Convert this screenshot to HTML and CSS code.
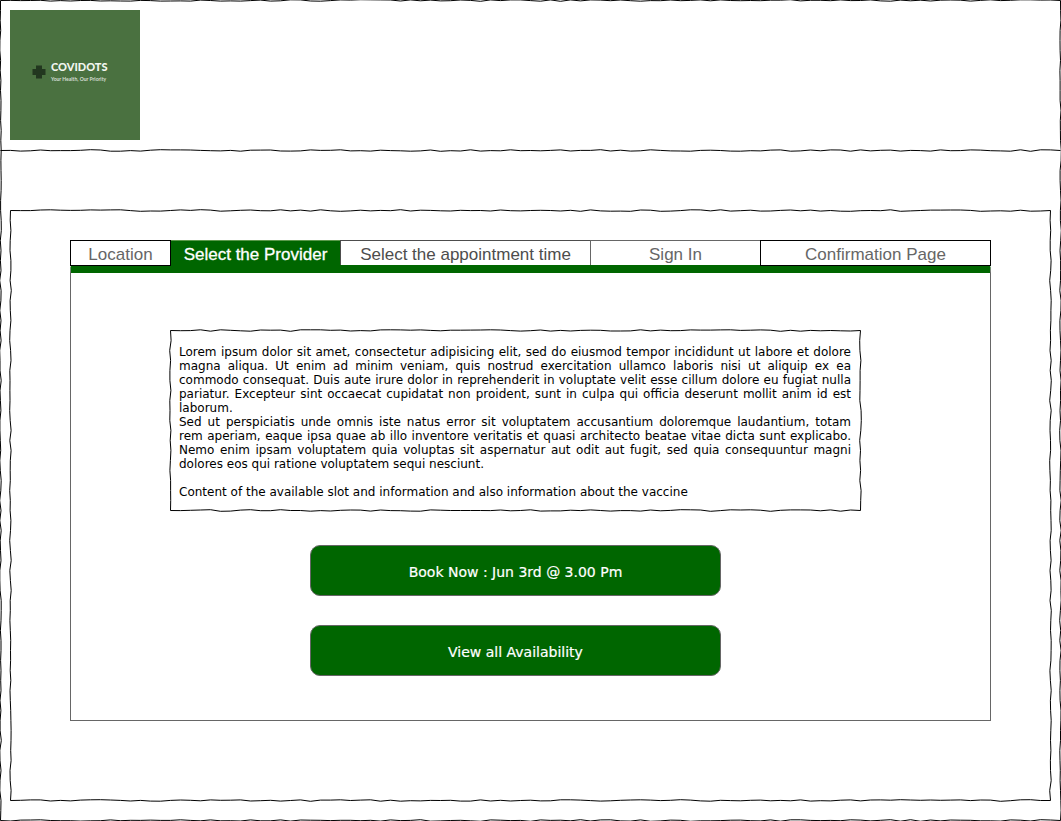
FILE: index.html
```html
<!DOCTYPE html>
<html lang="en">
<head>
<meta charset="utf-8">
<meta name="viewport" content="width=device-width, initial-scale=1">
<title>Covidots</title>
<link rel="stylesheet" href="styles.css">
</head>
<body>
<div class="page sketch" data-seed="7">
  <header class="header sketch" data-seed="23" data-sides="bottom">
    <div class="logo">
      <svg class="logo-mark" viewBox="0 0 14 14" aria-hidden="true"><path d="M4 .5h6v3.500h3.500v6h-3.500v3.500h-6v-3.500h-3.500v-6h3.500z" fill="#22371f"/></svg>
      <div class="logo-text">
        <span class="logo-name">COVIDOTS</span>
        <span class="logo-tagline">Your Health, Our Priority</span>
      </div>
    </div>
  </header>
  <main class="main sketch" data-seed="41">
    <div class="tabs" role="tablist" aria-label="Booking steps">
      <button class="tab tab-edge" type="button" role="tab" aria-selected="false">Location</button>
      <button class="tab tab-active" type="button" role="tab" aria-selected="true" aria-controls="provider">Select the Provider</button>
      <button class="tab tab-next" type="button" role="tab" aria-selected="false">Select the appointment time</button>
      <button class="tab" type="button" role="tab" aria-selected="false">Sign In</button>
      <button class="tab tab-edge" type="button" role="tab" aria-selected="false">Confirmation Page</button>
    </div>
    <section class="panel" id="provider" role="tabpanel" aria-label="Select the Provider">
      <div class="panel-body">
        <div class="info sketch" data-seed="58">
          <p>Lorem ipsum dolor sit amet, consectetur adipisicing elit, sed do eiusmod tempor incididunt ut labore et dolore magna aliqua. Ut enim ad minim veniam, quis nostrud exercitation ullamco laboris nisi ut aliquip ex ea commodo consequat. Duis aute irure dolor in reprehenderit in voluptate velit esse cillum dolore eu fugiat nulla pariatur. Excepteur sint occaecat cupidatat non proident, sunt in culpa qui officia deserunt mollit anim id est laborum.</p>
          <p>Sed ut perspiciatis unde omnis iste natus error sit voluptatem accusantium doloremque laudantium, totam rem&nbsp;aperiam, eaque ipsa quae ab illo inventore veritatis et quasi architecto beatae vitae dicta sunt explicabo. Nemo enim ipsam voluptatem quia voluptas sit aspernatur aut odit aut fugit, sed quia consequuntur magni dolores eos qui ratione voluptatem sequi nesciunt.</p>
          <p class="info-note">Content of the available slot and information and also information about the vaccine</p>
        </div>
        <div class="actions">
          <button class="action" type="button">Book Now : Jun 3rd @ 3.00 Pm</button>
          <button class="action" type="button">View all Availability</button>
        </div>
      </div>
    </section>
  </main>
</div>
<script src="sketch.js"></script>
</body>
</html>
```

FILE: styles.css
```css
* {
  box-sizing: border-box;
}

body {
  margin: 0;
  background: #fff;
  color: #000;
  font-family: "DejaVu Sans", sans-serif;
  font-size: 12px;
  line-height: 14px;
}

button {
  font: inherit;
  cursor: pointer;
}

.sketch {
  position: relative;
}

.sketch-lines {
  position: absolute;
  inset: 0;
  width: 100%;
  height: 100%;
  pointer-events: none;
  fill: none;
  stroke: #000;
  stroke-width: 1;
}

.page {
  display: flex;
  flex-direction: column;
  min-height: 100vh;
  padding-bottom: 20px;
}

.header {
  padding: 10px 10px 11px;
}

.logo {
  display: flex;
  align-items: center;
  gap: 5px;
  width: 130px;
  height: 130px;
  padding: 0 22px 6px;
  background: #4a7140;
}

.logo-mark {
  flex: none;
  width: 14px;
  height: 14px;
}

.logo-text {
  display: flex;
  flex-direction: column;
  gap: 1px;
  font-family: Lato, sans-serif;
  white-space: nowrap;
}

.logo-name {
  color: #f2f6f0;
  font-size: 11px;
  font-weight: 900;
  line-height: 14px;
}

.logo-tagline {
  color: #d5dfd2;
  font-size: 5px;
  font-weight: 700;
  line-height: 9px;
}

.main {
  flex: 1;
  margin: 59px 10px 0;
  padding: 30px 60px 80px;
}

.tabs {
  display: grid;
  grid-template-columns: 100fr 170fr 250fr 170fr 231fr;
  grid-template-rows: 25px;
}

.tab {
  min-width: 0;
  margin-right: -1px;
  padding: 4px 0 0;
  border: 1px solid #666;
  border-bottom: 0;
  background: #fff;
  color: #666;
  font-family: "Liberation Sans", Arial, sans-serif;
  font-size: 17px;
  line-height: 20px;
}

.tab:last-child {
  margin-right: 0;
}

.tab-edge {
  position: relative;
  height: 26px;
  border: 1px solid #000;
}

.tab-active {
  border-color: #006600;
  border-top-color: #5c9a4c;
  background: #006600;
  color: #fff;
  -webkit-text-stroke: 0.3px #fff;
}

.tab-next {
  border-color: #4d4d4d;
  color: #4d4d4d;
}

.panel {
  border: 1px solid #666;
  border-top: 8px solid #006600;
  border-radius: 4px 4px 0 0;
}

.panel-body {
  padding: 57px 129px 44px 99px;
}

.info {
  padding: 15px 10px 12px 9px;
  text-align: justify;
}

.info p {
  margin: 0;
}

.info .info-note {
  margin-top: 14px;
}

.actions {
  display: flex;
  flex-direction: column;
  gap: 29px;
  padding: 34px 140px 0;
}

.action {
  height: 51px;
  padding: 2px 10px 0;
  border: 1px solid #666;
  border-radius: 10px;
  background: #006600;
  color: #fff;
  font-size: 14px;
  -webkit-text-stroke: 0.2px #fff;
}
```

FILE: sketch.js
```js
// Draws hand-sketched outlines around every .sketch element.
const NS = "http://www.w3.org/2000/svg";
const STEP = 10;

function generator(seed) {
  let s = seed;
  return () => {
    s = (s * 16807) % 2147483647;
    return s / 2147483647;
  };
}

function line(x1, y1, x2, y2, random) {
  const horizontal = y1 === y2;
  const length = horizontal ? x2 - x1 : y2 - y1;
  let d = `M${x1} ${y1}`;
  for (let t = STEP; t < length; t += STEP) {
    const shift = Math.round((random() * 2 - 1) * 8) / 10;
    d += horizontal ? `L${x1 + t} ${y1 + shift}` : `L${x1 + shift} ${y1 + t}`;
  }
  return `${d}L${x2} ${y2}`;
}

function draw(box) {
  const random = generator(Number(box.dataset.seed) * 7919);
  const right = box.clientWidth - 0.5;
  const bottom = box.clientHeight - 0.5;
  const sides = {
    top: [0.5, 0.5, right, 0.5],
    right: [right, 0.5, right, bottom],
    bottom: [0.5, bottom, right, bottom],
    left: [0.5, 0.5, 0.5, bottom]
  };
  const wanted = (box.dataset.sides || "top right bottom left").split(" ");
  const svg = document.createElementNS(NS, "svg");
  const path = document.createElementNS(NS, "path");
  svg.setAttribute("class", "sketch-lines");
  svg.setAttribute("overflow", "visible");
  svg.setAttribute("aria-hidden", "true");
  path.setAttribute("d", wanted.map((side) => line(...sides[side], random)).join(""));
  svg.append(path);
  box.querySelector(":scope > .sketch-lines")?.remove();
  box.append(svg);
}

function drawAll() {
  document.querySelectorAll(".sketch").forEach(draw);
}

drawAll();
window.addEventListener("resize", drawAll);
```
